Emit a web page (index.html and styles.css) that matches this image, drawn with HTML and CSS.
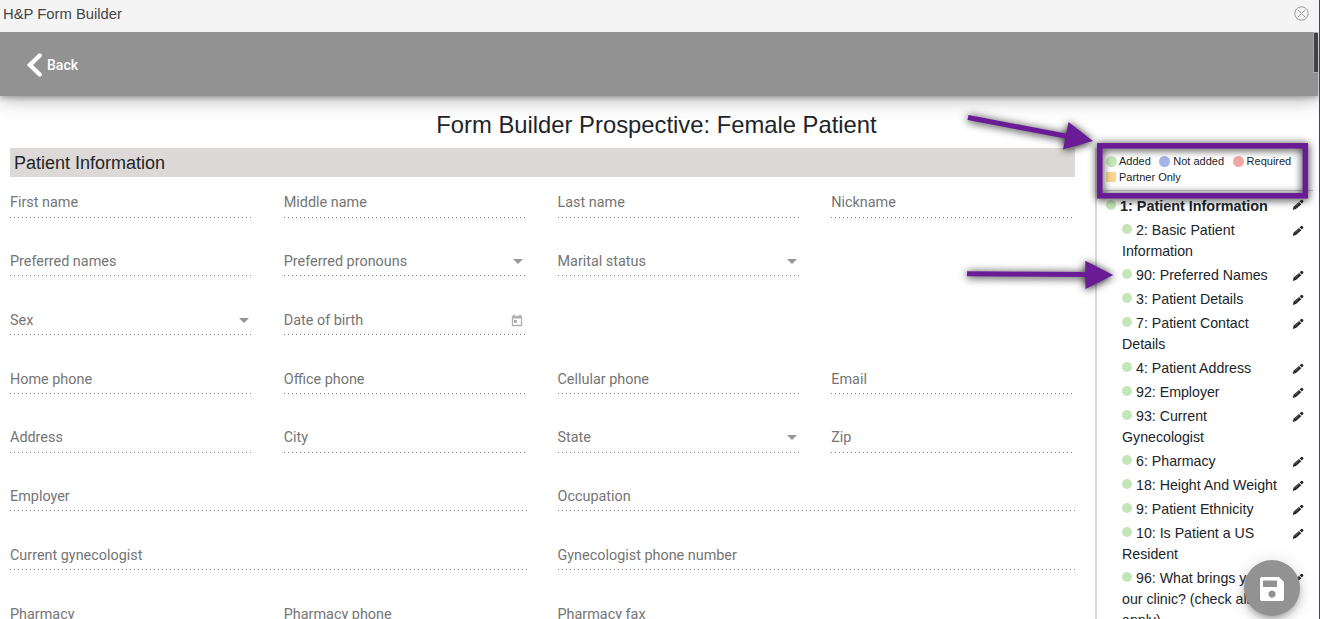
FILE: index.html
```html
<!DOCTYPE html>
<html lang="en">
<head>
<meta charset="utf-8">
<title>H&amp;P Form Builder</title>
<link rel="stylesheet" href="styles.css">
</head>
<body>
<svg class="defs" aria-hidden="true">
  <symbol id="pencil" viewBox="0 0 12 12">
    <path d="M.8 11l.7-3.200L7 2.900l2.300 2.300-5.400 4.900zM7.600 2.300L9.200.9q.6-.4 1.100 0l.9.900q.4.500 0 1.100L9.900 4.600z" fill="#212529"/>
    <path d="M3.200 8l4-3.800M2 9.700l.8.700" stroke="#fff" stroke-opacity=".5" stroke-width=".6"/>
  </symbol>
</svg>
<div class="window">
  <header class="titlebar">
    <span>H&amp;P Form Builder</span>
    <svg class="close" viewBox="0 0 15 15"><circle cx="7.500" cy="7.500" r="6.700"/><path d="M3.800 3.800l7.400 7.400M11.200 3.800l-7.400 7.400"/></svg>
  </header>
  <div class="toolbar">
    <svg class="chevron" viewBox="0 0 16 24"><path d="M13.700 2.500L3.900 12l9.800 9.500"/></svg>
    <span>Back</span>
    <i class="scroll-thumb"></i>
  </div>
  <h1>Form Builder Prospective: Female Patient</h1>
  <div class="content">
    <main class="form">
      <h2>Patient Information</h2>
      <div class="grid">
        <div class="field">First name</div>
        <div class="field">Middle name</div>
        <div class="field">Last name</div>
        <div class="field">Nickname</div>
        <div class="field">Preferred names</div>
        <div class="field select">Preferred pronouns</div>
        <div class="field select">Marital status</div>
        <div></div>
        <div class="field select">Sex</div>
        <div class="field">Date of birth
          <svg class="calendar" viewBox="0 0 12 13"><path d="M1.500 2.500h9v9h-9z" fill="none" stroke="#b0b0b0" stroke-width="1.300"/><path d="M1 2h10v2.500H1zM2.300.6h1.400v2H2.300zM8.300.6h1.400v2H8.300zM3 6h3v3H3z" fill="#b0b0b0"/></svg>
        </div>
        <div></div>
        <div></div>
        <div class="field">Home phone</div>
        <div class="field">Office phone</div>
        <div class="field">Cellular phone</div>
        <div class="field">Email</div>
        <div class="field">Address</div>
        <div class="field">City</div>
        <div class="field select">State</div>
        <div class="field">Zip</div>
        <div class="field wide">Employer</div>
        <div class="field wide">Occupation</div>
        <div class="field wide">Current gynecologist</div>
        <div class="field wide">Gynecologist phone number</div>
        <div class="field">Pharmacy</div>
        <div class="field">Pharmacy phone</div>
        <div class="field">Pharmacy fax</div>
      </div>
    </main>
    <aside class="outline">
      <div class="legend">
        <span><i class="dot green"></i>Added</span>
        <span><i class="dot blue"></i>Not added</span>
        <span><i class="dot red"></i>Required</span>
        <span><i class="dot square"></i>Partner Only</span>
      </div>
      <ul class="tree">
        <li class="section"><span><i class="dot"></i>1: Patient Information</span><svg class="pencil"><use href="#pencil"/></svg></li>
        <li><span><i class="dot"></i>2: Basic Patient<br>Information</span><svg class="pencil"><use href="#pencil"/></svg></li>
        <li><span><i class="dot"></i>90: Preferred Names</span><svg class="pencil"><use href="#pencil"/></svg></li>
        <li><span><i class="dot"></i>3: Patient Details</span><svg class="pencil"><use href="#pencil"/></svg></li>
        <li><span><i class="dot"></i>7: Patient Contact<br>Details</span><svg class="pencil"><use href="#pencil"/></svg></li>
        <li><span><i class="dot"></i>4: Patient Address</span><svg class="pencil"><use href="#pencil"/></svg></li>
        <li><span><i class="dot"></i>92: Employer</span><svg class="pencil"><use href="#pencil"/></svg></li>
        <li><span><i class="dot"></i>93: Current<br>Gynecologist</span><svg class="pencil"><use href="#pencil"/></svg></li>
        <li><span><i class="dot"></i>6: Pharmacy</span><svg class="pencil"><use href="#pencil"/></svg></li>
        <li><span><i class="dot"></i>18: Height And Weight</span><svg class="pencil"><use href="#pencil"/></svg></li>
        <li><span><i class="dot"></i>9: Patient Ethnicity</span><svg class="pencil"><use href="#pencil"/></svg></li>
        <li><span><i class="dot"></i>10: Is Patient a US<br>Resident</span><svg class="pencil"><use href="#pencil"/></svg></li>
        <li><span><i class="dot"></i>96: What brings you to<br>our clinic? (check all that<br>apply)</span><svg class="pencil"><use href="#pencil"/></svg></li>
      </ul>
    </aside>
  </div>
</div>
<button class="save" aria-label="Save">
  <svg viewBox="0 0 24 24"><path fill="#fff" fill-rule="evenodd" d="M2 0h17l5 5v17q0 2-2 2H2q-2 0-2-2V2q0-2 2-2zM3 3.500V10h14V3.500zM12 13.500a3.600 3.600 0 1 0 .01 0z"/></svg>
</button>
<svg class="callouts" viewBox="0 0 1320 619">
  <g fill="none" stroke="#6a1b96" stroke-width="5">
    <path d="M968 117.500L1068 136.500"/>
    <path d="M967 273.700L1088 274.600"/>
    <rect x="1099.800" y="145.800" width="205.500" height="50" stroke-width="5.500"/>
  </g>
  <g fill="#6a1b96">
    <path d="M1068.500 122L1093 141l-30 8.500z"/>
    <path d="M1085.300 260.700L1113.200 275l-27.700 14z"/>
  </g>
</svg>
</body>
</html>
```
FILE: styles.css
```css
* { box-sizing: border-box; }
body {
  margin: 0;
  height: 619px;
  overflow: hidden;
  background: #fff;
  color: #212529;
  font-family: "Liberation Sans", Arial, sans-serif;
}
.defs { display: none; }
.window {
  height: 619px;
  overflow: hidden;
  border-right: 1px solid #43464a;
}
.titlebar {
  display: flex;
  align-items: center;
  justify-content: space-between;
  position: relative;
  z-index: 1;
  height: 32px;
  padding: 0 10.500px 5px 3px;
  background: #f4f4f4;
  color: #444;
  font-size: 14.800px;
}
.close { width: 15px; height: 15px; fill: none; stroke: #999; stroke-width: 1; }
.toolbar {
  display: flex;
  align-items: center;
  position: relative;
  height: 64px;
  margin-right: 1px;
  padding: 2px 0 0 26px;
  background: #929292;
  box-shadow: 0 2px 5px rgba(0,0,0,.25), 0 4px 18px rgba(0,0,0,.28);
  color: #fff;
  font: 500 14px Roboto, sans-serif;
}
.chevron { width: 16px; height: 24px; margin-right: 5px; fill: none; stroke: #fff; stroke-width: 4.300; stroke-linecap: round; }
.scroll-thumb {
  position: absolute;
  top: 0;
  right: 0;
  width: 5px;
  height: 41px;
  border: 1px solid #aaa;
  border-right: 0;
  background: #424242;
}
h1 {
  margin: 12px 6px 6px 0;
  font-size: 23.800px;
  font-weight: 400;
  line-height: 34px;
  text-align: center;
}
.content { display: flex; }
.form { width: 1095px; flex: none; padding-left: 10px; }
h2 {
  width: 1065px;
  height: 29px;
  margin: 0 0 10.600px;
  padding-left: 4px;
  background: #ddd9d8;
  font-size: 18px;
  font-weight: 400;
  line-height: 31px;
}
.grid { display: grid; grid-template-columns: repeat(4, 273.75px); grid-auto-rows: 58.75px; }
.field {
  position: relative;
  width: 242px;
  height: 30px;
  padding-top: .7px;
  background: repeating-linear-gradient(90deg, #8a8a8a 0 1px, transparent 1px 4px) left bottom / 100% 1px no-repeat;
  color: #757575;
  font: 14.400px/29px Roboto, sans-serif;
}
.wide { grid-column: span 2; width: 517.500px; }
.select::after {
  content: "";
  position: absolute;
  top: 12.800px;
  right: 3px;
  border: 5px solid transparent;
  border-top-color: #969696;
  border-bottom: 0;
}
.calendar { position: absolute; right: 3px; top: 9px; width: 12px; height: 13px; }
.outline { width: 218px; border-left: 2px solid #ddd9d9; }
.legend {
  display: flex;
  flex-wrap: wrap;
  align-content: flex-start;
  height: 43px;
  margin-left: 8px;
  padding-top: 5px;
  border-bottom: 1px solid #ccc;
  font-size: 11px;
  line-height: 16px;
}
.legend span { display: flex; align-items: center; margin-right: 7.500px; }
.legend .dot { width: 11px; height: 11px; margin: 0 3px 0 1px; }
.legend .green, .legend .square { margin: 0 2px 0 1px; }
.legend .square { width: 10px; height: 10px; margin-right: 3px; }
.dot { display: inline-block; width: 10px; height: 10px; margin-right: 4px; border-radius: 50%; background: #c5e5b8; }
.blue { background: #a5b4e8; }
.red { background: #efa7a7; }
.legend .square { background: #fcd491; border-radius: 1px; }
.tree { margin: 0; padding: 5px 0 0 25px; list-style: none; font-size: 14.200px; line-height: 21px; white-space: nowrap; }
.tree li { display: flex; justify-content: space-between; margin-bottom: 3px; }
.tree span { width: 165px; }
.tree .dot { vertical-align: .7px; }
.tree .section { margin-left: -16px; font-size: 14.400px; font-weight: 700; }
.pencil { width: 12px; height: 12px; margin: 4.500px 9px 0 0; flex: none; }
.tree .section .pencil { margin-top: 3px; }
.save {
  position: absolute;
  left: 1244px;
  top: 560px;
  width: 56px;
  height: 56px;
  padding: 2px 0 0;
  border: 0;
  border-radius: 50%;
  background: #929292;
  box-shadow: 0 3px 5px -1px rgba(0,0,0,.2), 0 6px 10px rgba(0,0,0,.14), 0 1px 18px rgba(0,0,0,.12);
}
.save svg { display: block; width: 24px; height: 24px; margin: auto; }
.callouts { position: absolute; inset: 0; width: 1320px; height: 619px; pointer-events: none; filter: drop-shadow(0 1px 4px rgba(0,0,0,.95)); }
```
